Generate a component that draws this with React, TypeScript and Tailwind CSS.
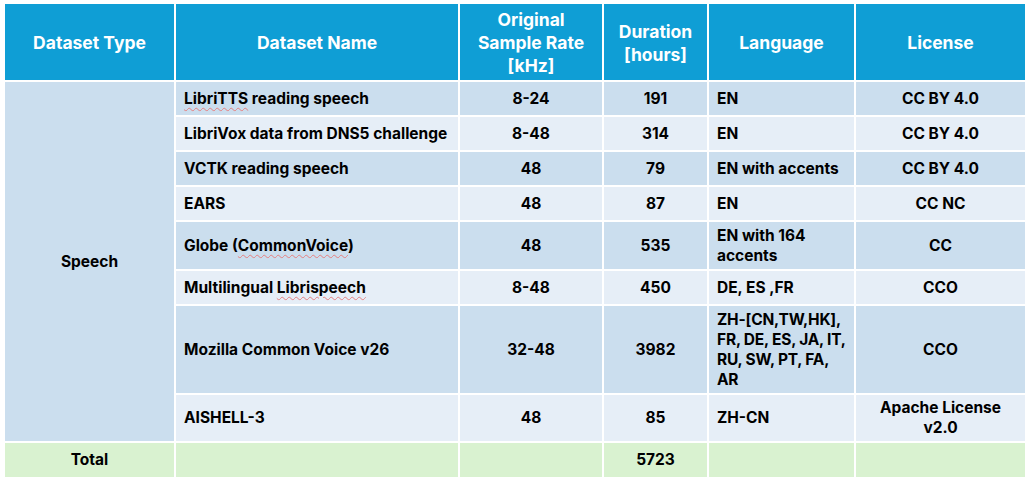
import React from "react";

const A = "font-['Inter','Open_Sans',sans-serif]";

const dark = "bg-[#cbdeee]";
const light = "bg-[#e6eef7]";
const green = "bg-[#d9f2d0]";

const sq = "underline decoration-wavy decoration-[#e58080] decoration-1 underline-offset-[3px]";

function H({ children }: { children: React.ReactNode }) {
  return (
    <div className={`bg-[#0f9ed5] text-white ${A} font-bold text-[17.5px] leading-[23px] flex items-center justify-center text-center pt-[1px]`}>
      {children}
    </div>
  );
}

function C({
  children,
  bg,
  center,
  className = "",
}: {
  children?: React.ReactNode;
  bg: string;
  center?: boolean;
  className?: string;
}) {
  return (
    <div
      className={`${bg} ${A} font-bold text-[15.5px] leading-[20px] text-black flex items-center ${
        center ? "justify-center text-center" : "justify-start px-2"
      } ${className}`}
    >
      {children}
    </div>
  );
}

export default function App() {
  return (
    <div className="w-[1028px] h-[488px] bg-white pt-[4px] pl-[5px]">
      <div className="grid grid-cols-[169px_282px_142px_103px_145px_169px] grid-rows-[76px_33px_33px_33px_33px_47px_33px_87px_46px_34px] gap-[2px] w-[1020px]">
        <H>Dataset Type</H>
        <H>Dataset Name</H>
        <H>
          Original
          <br />
          Sample Rate
          <br />
          [kHz]
        </H>
        <H>
          Duration
          <br />
          [hours]
        </H>
        <H>Language</H>
        <H>License</H>

        <div className={`${dark} ${A} font-bold text-[15.5px] text-black row-span-8 flex items-center justify-center`}>
          Speech
        </div>

        {/* row 1 */}
        <C bg={dark}>
          <span>
            <span className={sq}>LibriTTS</span> reading speech
          </span>
        </C>
        <C bg={dark} center>8-24</C>
        <C bg={dark} center>191</C>
        <C bg={dark}>EN</C>
        <C bg={dark} center>CC BY 4.0</C>

        {/* row 2 */}
        <C bg={light}>LibriVox data from DNS5 challenge</C>
        <C bg={light} center>8-48</C>
        <C bg={light} center>314</C>
        <C bg={light}>EN</C>
        <C bg={light} center>CC BY 4.0</C>

        {/* row 3 */}
        <C bg={dark}>VCTK reading speech</C>
        <C bg={dark} center>48</C>
        <C bg={dark} center>79</C>
        <C bg={dark}>EN with accents</C>
        <C bg={dark} center>CC BY 4.0</C>

        {/* row 4 */}
        <C bg={light}>EARS</C>
        <C bg={light} center>48</C>
        <C bg={light} center>87</C>
        <C bg={light}>EN</C>
        <C bg={light} center>CC NC</C>

        {/* row 5 */}
        <C bg={dark}>
          <span>
            Globe (<span className={sq}>CommonVoice</span>)
          </span>
        </C>
        <C bg={dark} center>48</C>
        <C bg={dark} center>535</C>
        <C bg={dark}>
          <span>
            EN with 164
            <br />
            accents
          </span>
        </C>
        <C bg={dark} center>CC</C>

        {/* row 6 */}
        <C bg={light}>
          <span>
            Multilingual <span className={sq}>Librispeech</span>
          </span>
        </C>
        <C bg={light} center>8-48</C>
        <C bg={light} center>450</C>
        <C bg={light}>DE, ES ,FR</C>
        <C bg={light} center>CCO</C>

        {/* row 7 */}
        <C bg={dark}>Mozilla Common Voice v26</C>
        <C bg={dark} center>32-48</C>
        <C bg={dark} center>3982</C>
        <C bg={dark} className="whitespace-nowrap tracking-[-0.2px]">
          <span>
            ZH-[CN,TW,HK],
            <br />
            FR, DE, ES, JA, IT,
            <br />
            RU, SW, PT, FA,
            <br />
            AR
          </span>
        </C>
        <C bg={dark} center>CCO</C>

        {/* row 8 */}
        <C bg={light}>AISHELL-3</C>
        <C bg={light} center>48</C>
        <C bg={light} center>85</C>
        <C bg={light}>ZH-CN</C>
        <C bg={light} center>
          <span>
            Apache License
            <br />
            v2.0
          </span>
        </C>

        {/* total */}
        <C bg={green} center>Total</C>
        <C bg={green} />
        <C bg={green} />
        <C bg={green} center>5723</C>
        <C bg={green} />
        <C bg={green} />
      </div>
    </div>
  );
}
